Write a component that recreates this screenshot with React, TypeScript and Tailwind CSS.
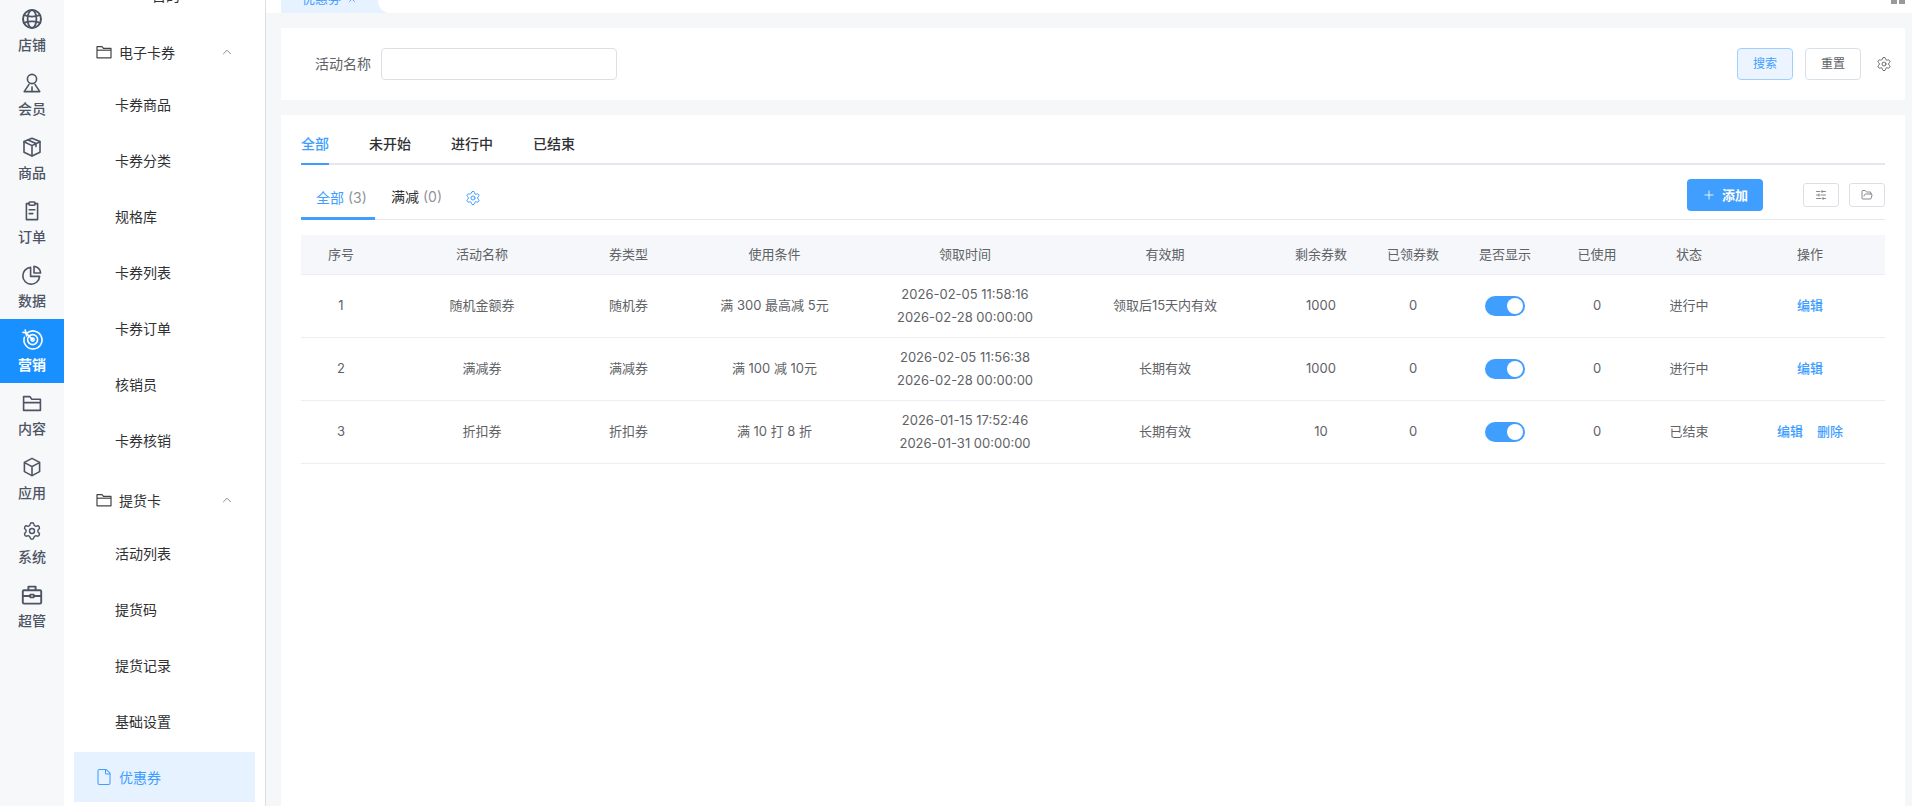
import { ChevronUp, File, FolderOpen, Plus, Settings, SlidersHorizontal, X } from "lucide-react";
import type { ReactNode } from "react";

function RailIcon({ children, size = 24 }: { children: ReactNode; size?: number }) {
  return (
    <svg width={size} height={size} viewBox="0 0 24 24" fill="none" stroke="currentColor" strokeWidth="1.6" strokeLinecap="round" strokeLinejoin="round" aria-hidden="true">
      {children}
    </svg>
  );
}

const railItems: { label: string; icon: ReactNode; active?: boolean }[] = [
  {
    label: "店铺",
    icon: (
      <RailIcon>
        <circle cx="12" cy="12" r="9" strokeWidth="2" />
        <ellipse cx="12" cy="12" rx="4.4" ry="9" strokeWidth="1.8" />
        <path d="M4 8.2c4.6 1.6 11.4 1.6 16 0M4 15.8c4.6-1.6 11.4-1.6 16 0" strokeWidth="1.8" />
      </RailIcon>
    ),
  },
  {
    label: "会员",
    icon: (
      <RailIcon>
        <circle cx="12" cy="8" r="4.6" />
        <path d="M9 13.4 4.2 20.6h15.6L15 13.4" />
        <path d="M12 16v4.4" />
      </RailIcon>
    ),
  },
  {
    label: "商品",
    icon: (
      <RailIcon>
        <path d="M12 3.2 20 6.6v10.6l-8 3.8-8-3.8V6.6z" />
        <path d="M4 6.8 12 10.6 20 6.8M12 10.6V21M8 5l8 3.6v3" />
      </RailIcon>
    ),
  },
  {
    label: "订单",
    icon: (
      <RailIcon>
        <path d="M9 4.6H6.4v16h11.2v-16H15" />
        <rect x="9" y="3" width="6" height="3.2" rx="1" />
        <path d="M9.2 10.8h5.6M9.2 14.6h3.6" />
      </RailIcon>
    ),
  },
  {
    label: "数据",
    icon: (
      <RailIcon>
        <path d="M10.6 4.4a8.4 8.4 0 1 0 9 9h-9z" />
        <path d="M14 3.4a7 7 0 0 1 6.6 6.6H14z" />
      </RailIcon>
    ),
  },
  {
    label: "营销",
    active: true,
    icon: (
      <RailIcon>
        <path d="M7 6.2a9 9 0 1 1-2.6 4" />
        <circle cx="12.6" cy="12.6" r="5" />
        <circle cx="12.6" cy="12.6" r="1.6" />
        <path d="M12.4 12.4 6 6M3 5.4 6 6l.6 3M6 6 5.2 3" />
      </RailIcon>
    ),
  },
  {
    label: "内容",
    icon: (
      <RailIcon>
        <path d="M3.6 19.4V5.6h6.2l2 2.6h8.6v11.2z" />
        <path d="M3.6 11.6h16.8" />
      </RailIcon>
    ),
  },
  {
    label: "应用",
    icon: (
      <RailIcon>
        <path d="M12 3.4 19.6 7.4v9.2L12 20.6l-7.6-4V7.4z" />
        <path d="M4.6 7.6 12 11.6l7.4-4M12 11.6v9" />
      </RailIcon>
    ),
  },
  {
    label: "系统",
    icon: <Settings size={20} strokeWidth={1.7} />,
  },
  {
    label: "超管",
    icon: (
      <RailIcon>
        <rect x="2.8" y="7.2" width="18.4" height="13.4" rx="1.2" strokeWidth="1.9" />
        <path d="M8.4 7V3.6h7.2V7M3 13h7M14 13h7" strokeWidth="1.9" />
        <rect x="10.2" y="11.6" width="3.6" height="2.8" />
      </RailIcon>
    ),
  },
];

const cardItems = ["卡券商品", "卡券分类", "规格库", "卡券列表", "卡券订单", "核销员", "卡券核销"];
const pickupItems = ["活动列表", "提货码", "提货记录", "基础设置"];

const headers = [
  { label: "序号", width: "w-[80px]" },
  { label: "活动名称", width: "w-[202px]" },
  { label: "券类型", width: "w-[91px]" },
  { label: "使用条件", width: "w-[201px]" },
  { label: "领取时间", width: "w-[180px]" },
  { label: "有效期", width: "w-[220px]" },
  { label: "剩余券数", width: "w-[92px]" },
  { label: "已领券数", width: "w-[92px]" },
  { label: "是否显示", width: "w-[92px]" },
  { label: "已使用", width: "w-[92px]" },
  { label: "状态", width: "w-[92px]" },
  { label: "操作", width: "w-[150px]" },
];

const rows = [
  { id: 1, name: "随机金额券", type: "随机券", rule: "满 300 最高减 5元", start: "2026-02-05 11:58:16", end: "2026-02-28 00:00:00", valid: "领取后15天内有效", left: 1000, status: "进行中", remove: false },
  { id: 2, name: "满减券", type: "满减券", rule: "满 100 减 10元", start: "2026-02-05 11:56:38", end: "2026-02-28 00:00:00", valid: "长期有效", left: 1000, status: "进行中", remove: false },
  { id: 3, name: "折扣券", type: "折扣券", rule: "满 10 打 8 折", start: "2026-01-15 17:52:46", end: "2026-01-31 00:00:00", valid: "长期有效", left: 10, status: "已结束", remove: true },
];

function GroupHeader({ label, className }: { label: string; className: string }) {
  return (
    <div className={`flex h-[50px] items-center pl-[22px] pr-[21px] text-[14px] text-[#303133] ${className}`}>
      <svg width="16" height="16" viewBox="0 0 16 16" fill="none" stroke="#444" strokeWidth="1.2" strokeLinejoin="round" className="shrink-0" aria-hidden="true">
        <path d="M1 2.6h5l1.4 1.8H15v9.4H1z" />
        <path d="M1 6.2h14" />
      </svg>
      <span className="ml-[7px] flex-1">{label}</span>
      <ChevronUp size={14} strokeWidth={1.3} className="text-[#666]" />
    </div>
  );
}

function SubItem({ label }: { label: string }) {
  return <div className="mb-[6px] flex h-[50px] items-center pl-[41px] text-[14px] text-[#303133]">{label}</div>;
}

function Toggle() {
  return (
    <span className="mx-auto flex h-[20px] w-[40px] items-center justify-end rounded-full bg-[#409eff] pr-[2px]">
      <span className="h-[16px] w-[16px] rounded-full bg-white" />
    </span>
  );
}

export default function App() {
  return (
    <div className="flex h-[806px] w-[1912px] overflow-hidden bg-[#f6f7f9] font-['Inter','Noto_Sans_CJK_SC',sans-serif]">
      <aside className="mt-[-1px] w-[64px] shrink-0 bg-[#f7f8fa]">
        {railItems.map((item) => (
          <div
            key={item.label}
            className={`flex h-[64px] flex-col items-center pt-[8px] text-[14px] ${item.active ? "bg-[#1890ff] font-semibold text-white" : "font-medium text-[#4d5464]"}`}
          >
            <span className="flex h-[24px] items-center">{item.icon}</span>
            <span className="mt-[2px] leading-[24px]">{item.label}</span>
          </div>
        ))}
      </aside>

      <nav className="mt-[-30px] w-[202px] shrink-0 border-r border-[#dcdfe6] bg-white px-[10px]">
        <div className="flex h-[50px] items-center pl-[78px] text-[14px] text-[#303133]">目的</div>
        <GroupHeader label="电子卡券" className="mt-[7px] mb-[2px]" />
        {cardItems.map((label) => (
          <SubItem key={label} label={label} />
        ))}
        <GroupHeader label="提货卡" className="mt-[10px] mb-[3px]" />
        {pickupItems.map((label) => (
          <SubItem key={label} label={label} />
        ))}
        <div className="flex h-[50px] items-center bg-[#e6f2ff] pl-[21px] text-[14px] text-[#409eff]">
          <File size={18} strokeWidth={1.4} />
          <span className="ml-[6px]">优惠券</span>
        </div>
      </nav>

      <main className="flex min-w-0 flex-1 flex-col">
        <div className="relative flex h-[13px] shrink-0 items-end overflow-hidden bg-white pl-[15px]">
          <div className="flex h-[13px] w-[97px] items-center gap-[6px] bg-[#e6f2ff] pl-[21px] text-[13px] leading-[13px] text-[#409eff]">
            <span className="mt-[-16px]">优惠券</span>
            <X size={10} className="mt-[-16px]" />
          </div>
          <div className="h-[13px] w-[14px] bg-[#e6f2ff]">
            <div className="h-[13px] w-[14px] rounded-bl-[12px] bg-white" />
          </div>
          <div className="absolute top-[-8px] right-[7px] grid grid-cols-2 gap-[2px]">
            <span className="h-[5px] w-[6px] bg-[#999]" />
            <span className="h-[5px] w-[6px] bg-[#999]" />
            <span className="h-[5px] w-[6px] bg-[#999]" />
            <span className="h-[5px] w-[6px] bg-[#999]" />
          </div>
        </div>

        <section className="mt-[15px] ml-[15px] mr-[7px] flex h-[72px] shrink-0 items-center bg-white pl-[34px] pr-[13px]">
          <label className="mb-[1px] text-[14px] text-[#606266]">活动名称</label>
          <div className="ml-[10px] h-[32px] w-[236px] rounded-[4px] border border-[#dcdfe6] bg-white" />
          <div className="flex-1" />
          <button className="h-[32px] w-[56px] rounded-[4px] border border-[#a0cfff] bg-[#ecf5ff] text-[12px] text-[#409eff]">搜索</button>
          <button className="ml-[12px] h-[32px] w-[56px] rounded-[4px] border border-[#dcdfe6] bg-white text-[12px] text-[#606266]">重置</button>
          <Settings size={16} strokeWidth={1.4} className="ml-[15px] text-[#606266]" />
        </section>

        <section className="mt-[15px] ml-[15px] mr-[7px] flex-1 bg-white px-[20px]">
          <div className="flex h-[50px] items-end gap-[40px] border-b-2 border-[#e4e7ed] text-[14px] font-medium text-[#303133]">
            <span className="mb-[-2px] h-[36px] border-b-2 border-[#409eff] leading-[30px] text-[#409eff]">全部</span>
            <span className="h-[34px] leading-[30px]">未开始</span>
            <span className="h-[34px] leading-[30px]">进行中</span>
            <span className="h-[34px] leading-[30px]">已结束</span>
          </div>

          <div className="flex h-[55px] items-end border-b border-[#e4e7ed]">
            <div className="mb-[-1px] h-[40px] w-[74px] border-b-[3px] border-[#409eff] pl-[15px] text-[14px] leading-[36px] text-[#409eff]">
              全部 <span className="text-[#909399]">(3)</span>
            </div>
            <div className="h-[40px] pl-[16px] text-[14px] leading-[36px] text-[#303133]">
              满减 <span className="text-[#909399]">(0)</span>
            </div>
            <div className="flex h-[40px] items-center pl-[23px] pb-[3px]">
              <Settings size={16} strokeWidth={1.5} className="text-[#409eff]" />
            </div>
            <div className="flex-1" />
            <button className="mb-[8px] flex h-[32px] w-[76px] items-center justify-center gap-[6px] rounded-[4px] bg-[#409eff] text-[13px] font-semibold text-white">
              <Plus size={14} strokeWidth={1.5} />
              <span className="mt-[1px]">添加</span>
            </button>
            <button className="mb-[12px] ml-[40px] flex h-[24px] w-[36px] items-center justify-center rounded-[3px] border border-[#dcdfe6] text-[#606266]">
              <SlidersHorizontal size={12} strokeWidth={1.5} />
            </button>
            <button className="mb-[12px] ml-[10px] flex h-[24px] w-[36px] items-center justify-center rounded-[3px] border border-[#dcdfe6] text-[#606266]">
              <FolderOpen size={12} strokeWidth={1.5} />
            </button>
          </div>

          <table className="mt-[15px] w-full table-fixed border-collapse text-center text-[13px] text-[#606266]">
            <thead>
              <tr className="h-[39px] border-b border-[#ebeef5] bg-[#f5f7fa]">
                {headers.map((h) => (
                  <th key={h.label} className={`${h.width} font-normal`}>{h.label}</th>
                ))}
              </tr>
            </thead>
            <tbody>
              {rows.map((row) => (
                <tr key={row.id} className="h-[63px] border-b border-[#ebeef5]">
                  <td>{row.id}</td>
                  <td>{row.name}</td>
                  <td>{row.type}</td>
                  <td>{row.rule}</td>
                  <td className="leading-[23px]">
                    <div>{row.start}</div>
                    <div>{row.end}</div>
                  </td>
                  <td>{row.valid}</td>
                  <td>{row.left}</td>
                  <td>0</td>
                  <td><Toggle /></td>
                  <td>0</td>
                  <td>{row.status}</td>
                  <td className="font-medium text-[#409eff]">
                    <span>编辑</span>
                    {row.remove && <span className="ml-[14px]">删除</span>}
                  </td>
                </tr>
              ))}
            </tbody>
          </table>
        </section>
      </main>
    </div>
  );
}
